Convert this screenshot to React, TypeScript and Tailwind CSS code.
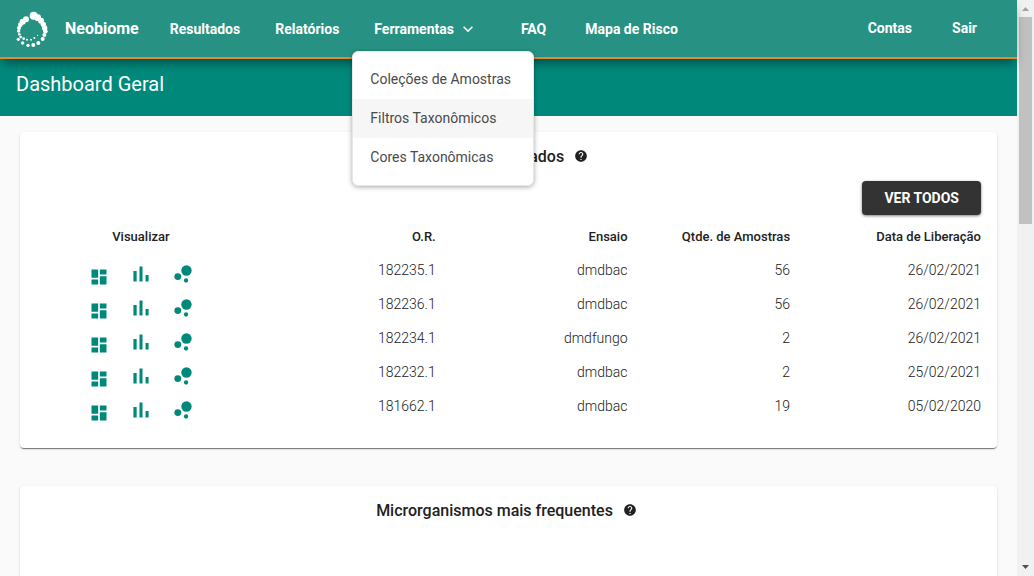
import { MdBubbleChart, MdDashboard, MdExpandMore, MdHelp } from 'react-icons/md';

type Result = {
  order: string;
  assay: string;
  samples: number;
  released: string;
};

const results: Result[] = [
  { order: '182235.1', assay: 'dmdbac', samples: 56, released: '26/02/2021' },
  { order: '182236.1', assay: 'dmdbac', samples: 56, released: '26/02/2021' },
  { order: '182234.1', assay: 'dmdfungo', samples: 2, released: '26/02/2021' },
  { order: '182232.1', assay: 'dmdbac', samples: 2, released: '25/02/2021' },
  { order: '181662.1', assay: 'dmdbac', samples: 19, released: '05/02/2020' },
];

// Each dot of the ring: centre x, centre y, radius.
const logoDots: [number, number, number][] = [
  [70, 30, 12], [82, 36, 10], [92, 45, 9], [99, 56, 8], [103, 67, 8],
  [105, 77, 7], [102, 88, 6], [97, 100, 6], [84, 112, 6], [69, 118, 6],
  [53, 119, 5], [37, 112, 5], [24, 101, 5], [82, 89, 2], [72, 97, 3],
  [62, 102, 3], [50, 102, 3], [40, 99, 4], [31, 94, 4], [27, 86, 4],
  [25, 76, 5], [26, 67, 6], [30, 57, 7], [37, 48, 9], [47, 41, 9],
];

function Logo() {
  return (
    <svg className="h-[37px] w-[33px] shrink-0" viewBox="17 16 99 111" fill="white" aria-hidden="true">
      {logoDots.map(([x, y, r]) => (
        <circle key={`${x}-${y}`} cx={x} cy={y} r={r} />
      ))}
    </svg>
  );
}

function BarChartIcon() {
  return (
    <svg className="size-[26px]" viewBox="0 0 24 24" fill="currentColor" aria-hidden="true">
      <path d="M5 9.200h3V19H5zM10.600 5h2.800v14h-2.800zM16.200 13H19v6h-2.800z" />
    </svg>
  );
}

function ToolsMenu() {
  return (
    <div className="relative">
      <button type="button" className="flex items-center gap-1" aria-expanded="true">
        Ferramentas
        <MdExpandMore className="size-5" />
      </button>
      <div className="absolute top-8 -left-[22px] w-[182px] rounded-md border border-gray-200 bg-white py-2 text-sm font-normal text-[#4a4a4a] shadow-[0_1px_5px_rgba(0,0,0,0.35)]">
        <a href="#colecoes" className="block px-[17px] py-[9px] leading-[21px]">Coleções de Amostras</a>
        <a href="#filtros" className="block bg-[#f6f6f6] px-[17px] py-[9px] leading-[21px]">Filtros Taxonômicos</a>
        <a href="#cores" className="block px-[17px] py-[9px] leading-[21px]">Cores Taxonômicas</a>
      </div>
    </div>
  );
}

function Header() {
  return (
    <header className="relative z-10 flex items-center justify-between border-b-2 border-[#e38a2c] bg-[#279283] pr-10 pl-4 text-sm font-bold text-white shadow-[0_6px_10px_-3px_rgba(0,0,0,0.5)]">
      <nav className="flex h-[57px] items-center gap-[35px] pt-px">
        <a href="#inicio" className="-mr-1 flex items-center gap-4 text-base">
          <Logo />
          Neobiome
        </a>
        <a href="#resultados">Resultados</a>
        <a href="#relatorios">Relatórios</a>
        <ToolsMenu />
        <a href="#faq" className="mr-1 ml-2">FAQ</a>
        <a href="#mapa">Mapa de Risco</a>
      </nav>
      <nav className="flex items-center gap-10 pb-px">
        <a href="#contas">Contas</a>
        <a href="#sair">Sair</a>
      </nav>
    </header>
  );
}

function CardTitle({ children }: { children: string }) {
  return (
    <h2 className="flex items-center justify-center gap-2.5 pr-1 text-base leading-6 font-medium text-[#212121]">
      {children}
      <MdHelp className="mb-0.5 size-3.5" aria-label="Ajuda" />
    </h2>
  );
}

function ResultsTable() {
  return (
    <table className="w-full table-fixed text-right text-[#212121]">
      <colgroup>
        <col className="w-[22.2%]" />
        <col className="w-[20.1%]" />
        <col className="w-[20.3%]" />
        <col className="w-[17.2%]" />
        <col className="w-[20.2%]" />
      </colgroup>
      <thead className="text-[13px] leading-5">
        <tr className="h-[34px]">
          <th scope="col" className="pt-0.5 text-center font-medium">Visualizar</th>
          <th scope="col" className="pt-0.5 font-medium">O.R.</th>
          <th scope="col" className="pt-0.5 font-medium">Ensaio</th>
          <th scope="col" className="pt-0.5 font-medium">Qtde. de Amostras</th>
          <th scope="col" className="pt-0.5 font-medium">Data de Liberação</th>
        </tr>
      </thead>
      <tbody className="text-sm font-light">
        {results.map((row) => (
          <tr key={row.order} className="h-[34px]">
            <td className="align-bottom">
              <div className="flex items-end justify-center gap-4 text-[#00897b]">
                <a href="#painel" aria-label="Painel" className="flex w-[26px] justify-center">
                  <MdDashboard className="size-5" />
                </a>
                <a href="#barras" aria-label="Gráfico de barras">
                  <BarChartIcon />
                </a>
                <a href="#bolhas" aria-label="Gráfico de bolhas">
                  <MdBubbleChart className="size-[26px]" />
                </a>
              </div>
            </td>
            <td>{row.order}</td>
            <td>{row.assay}</td>
            <td>{row.samples}</td>
            <td>{row.released}</td>
          </tr>
        ))}
      </tbody>
    </table>
  );
}

function Scrollbar() {
  return (
    <div className="flex w-[17px] shrink-0 flex-col items-center bg-[#f1f1f1]" aria-hidden="true">
      <svg className="size-[17px] shrink-0" viewBox="0 0 17 17" fill="#a3a3a3">
        <path d="M5 11h7L8.500 7z" />
      </svg>
      <div className="h-[36%] w-[13px] bg-[#c1c1c1]" />
      <svg className="mt-auto size-[17px] shrink-0" viewBox="0 0 17 17" fill="#505050">
        <path d="M5 6h7l-3.500 4z" />
      </svg>
    </div>
  );
}

export default function App() {
  return (
    <div className="flex h-screen overflow-hidden bg-[#fafafa] font-[Roboto,sans-serif]">
      <div className="min-w-0 flex-1">
        <Header />
        <div className="bg-[#00897b] px-4 pt-[11px] pb-[18px]">
          <h1 className="text-xl leading-7 text-white">Dashboard Geral</h1>
        </div>
        <main className="flex flex-col gap-[38px] px-5 py-4">
          <section className="rounded bg-white px-4 pt-[13px] pb-[25px] shadow-[0_2px_1px_-1px_rgba(0,0,0,0.4),0_1px_1px_0_rgba(0,0,0,0.14),0_1px_3px_0_rgba(0,0,0,0.12)]">
            <CardTitle>Últimos Resultados</CardTitle>
            <div className="mt-3 mb-1 flex justify-end">
              <button type="button" className="rounded-sm bg-[#333333] px-[22px] py-[7px] text-sm leading-5 font-bold text-white shadow-[0_1px_3px_rgba(0,0,0,0.5)]">
                VER TODOS
              </button>
            </div>
            <ResultsTable />
          </section>
          <section className="h-80 rounded bg-white px-4 pt-[13px] shadow-[0_2px_1px_-1px_rgba(0,0,0,0.2),0_1px_1px_0_rgba(0,0,0,0.14),0_1px_3px_0_rgba(0,0,0,0.12)]">
            <CardTitle>Microrganismos mais frequentes</CardTitle>
          </section>
        </main>
      </div>
      <Scrollbar />
    </div>
  );
}
